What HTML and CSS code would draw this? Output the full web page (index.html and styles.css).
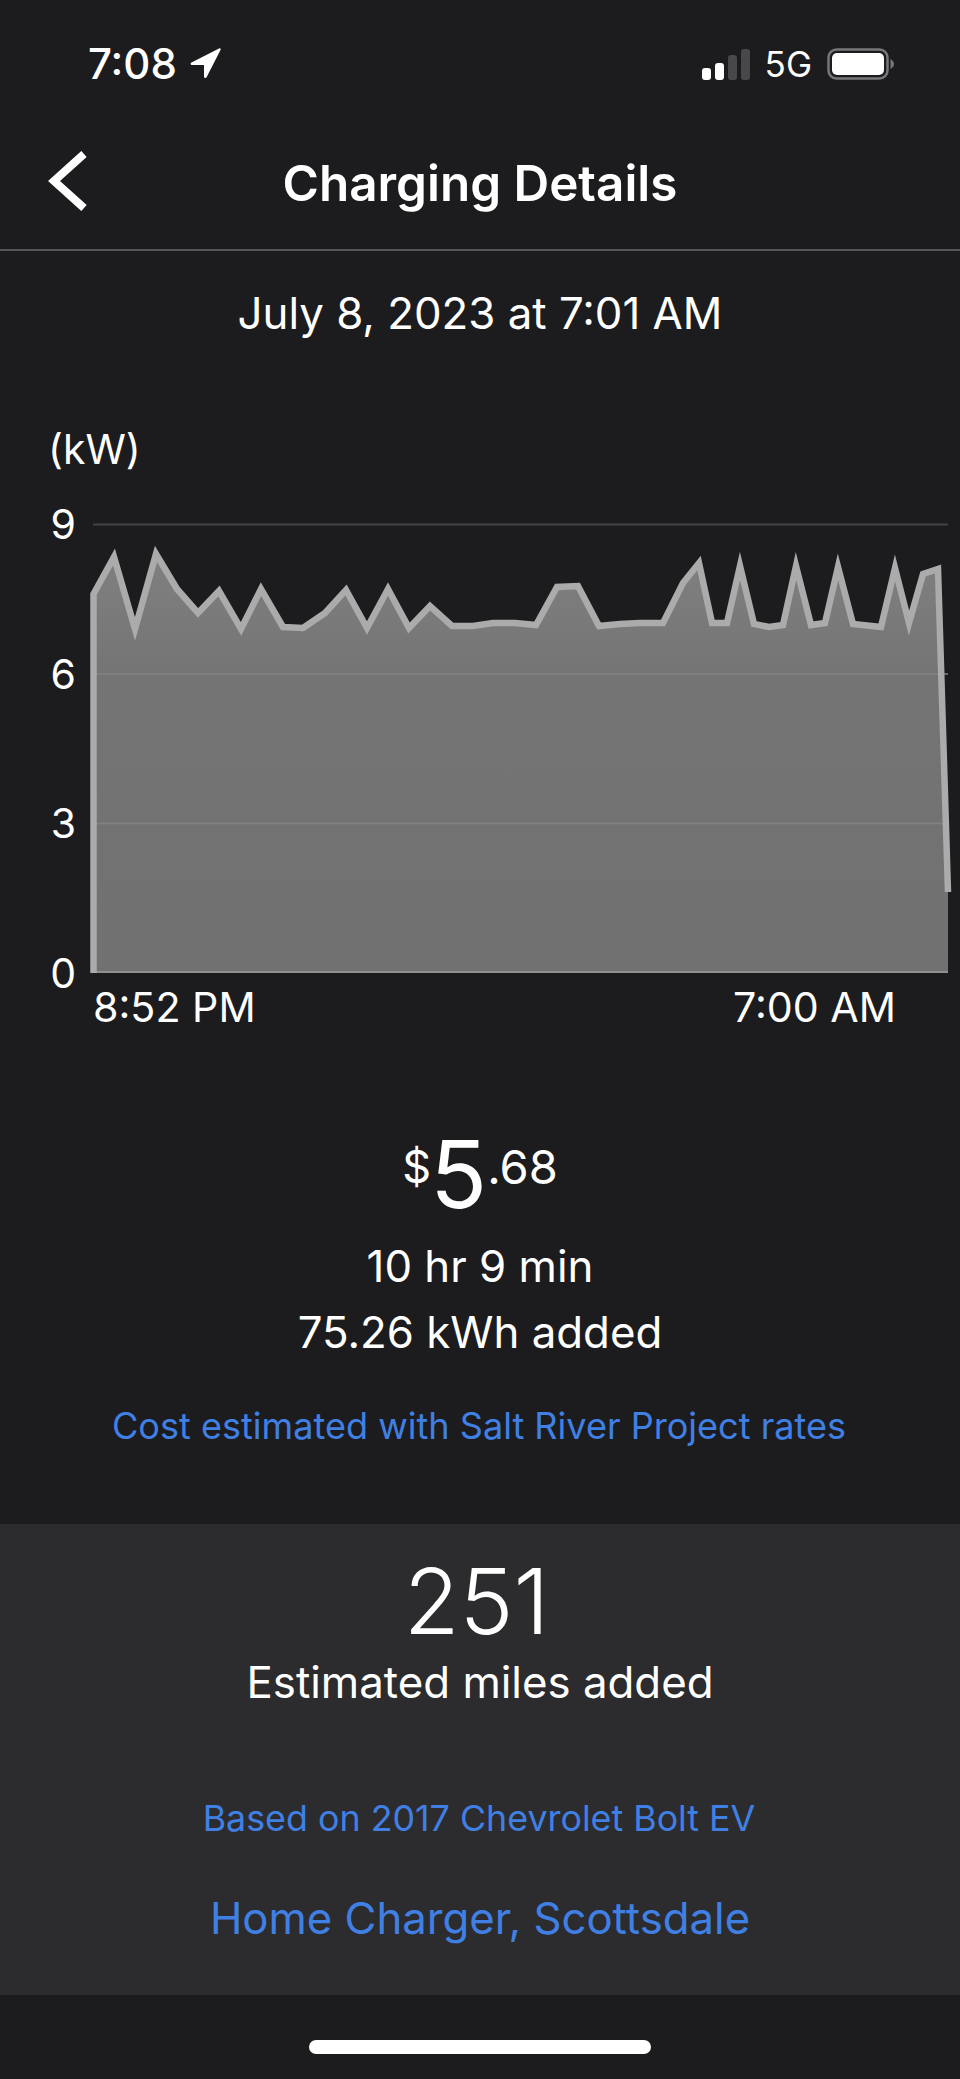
FILE: index.html
```html
<!DOCTYPE html>
<html lang="en">
<head>
<meta charset="utf-8">
<title>Charging Details</title>
<link rel="stylesheet" href="styles.css">
</head>
<body>
<div class="screen">
  <header class="status">
    <div class="status-left">
      <span class="clock">7:08</span>
      <svg class="loc" viewBox="0 0 32 32"><path d="M30 1.500 2.500 15.500c-1.500.8-1 2.500.6 2.500H15v11.500c0 1.700 2 2 2.700.6L31.500 3c.6-1.200-.3-2-1.500-1.500Z" fill="#fff"/></svg>
    </div>
    <div class="status-right">
      <div class="signal"><i class="bar b1"></i><i class="bar b2"></i><i class="bar b3"></i><i class="bar b4"></i></div>
      <span class="net">5G</span>
      <svg class="battery" viewBox="0 0 68 32"><rect x="1.500" y="1.500" width="59" height="29" rx="8" fill="none" stroke="#77777a" stroke-width="2.500"/><rect x="5" y="5" width="52" height="22" rx="5" fill="#fff"/><path d="M63.500 11v10c2-1 3.500-3 3.500-5s-1.500-4-3.500-5Z" fill="#77777a"/></svg>
    </div>
  </header>
  <nav class="nav">
    <svg class="back" viewBox="0 0 42 62"><path d="M37 4 7 31l30 27" fill="none" stroke="#fff" stroke-width="8"/></svg>
    <h1 class="title">Charging Details</h1>
  </nav>
  <p class="date">July 8, 2023 at 7:01 AM</p>
  <section class="chart">
    <div class="unit">(kW)</div>
    <div class="chart-row">
      <div class="y-axis"><span>9</span><span>6</span><span>3</span><span>0</span></div>
      <div class="plot">
        <svg class="plot-svg" viewBox="90 498 862 476">
          <defs><linearGradient id="fill" x1="0" y1="0" x2="0" y2="1"><stop offset="0" stop-color="#808080"/><stop offset=".3" stop-color="#747474"/><stop offset="1" stop-color="#717171"/></linearGradient></defs>
          <path d="M93 523.500H948" stroke="#424244" stroke-width="2" fill="none"/>
          <path fill="url(#fill)" d="M93.500 972V593L114 556 135 628 156 553 177 588 198 612 219 590 241 628 261 588 283 626 303 627 325 612 346 589 367 627 388 588 409 627 430 605 452 625 473 625 493 622 515 622 536 624 557 586 578 585 599 625 620 623 640 622 663 622 683 582 699 562 712 622 727 622 740 565 754 623 769 626 783 624 796 565 811 624 825 622 838 566 853 623 881 626 895 567 909 622 923 573 938 568 948 891V972Z"/>
          <path d="M96 673H948M96 822.500H948" stroke="#828282" stroke-width="1.500" fill="none"/>
          <path d="M93 971H948" stroke="#8f8f8f" stroke-width="2" fill="none"/>
          <path d="M93.500 972V593L114 556 135 628 156 553 177 588 198 612 219 590 241 628 261 588 283 626 303 627 325 612 346 589 367 627 388 588 409 627 430 605 452 625 473 625 493 622 515 622 536 624 557 586 578 585 599 625 620 623 640 622 663 622 683 582 699 562 712 622 727 622 740 565 754 623 769 626 783 624 796 565 811 624 825 622 838 566 853 623 881 626 895 567 909 622 923 573 938 568 948 891" fill="none" stroke="#ababab" stroke-width="6.500" stroke-linejoin="miter" stroke-miterlimit="30"/>
        </svg>
        <div class="x-axis"><span>8:52 PM</span><span>7:00 AM</span></div>
      </div>
    </div>
  </section>
  <section class="cost">
    <div class="price"><span class="cur">$</span><span class="dollars">5</span><span class="cents">.68</span></div>
    <p class="stat">10 hr 9 min</p>
    <p class="stat">75.26 kWh added</p>
    <a class="link rates">Cost estimated with Salt River Project rates</a>
  </section>
  <section class="panel">
    <div class="miles">251</div>
    <p class="stat miles-label">Estimated miles added</p>
    <a class="link based">Based on 2017 Chevrolet Bolt EV</a>
    <a class="home">Home Charger, Scottsdale</a>
  </section>
  <footer class="foot"><div class="home-bar"></div></footer>
</div>
</body>
</html>
```
FILE: styles.css
```css
* { box-sizing: border-box; }
html, body { margin: 0; padding: 0; background: #1c1c1e; }
.screen {
  width: 960px;
  height: 2079px;
  background: #1c1c1e;
  color: #fff;
  font-family: Inter, "Liberation Sans", sans-serif;
  display: flex;
  flex-direction: column;
  overflow: hidden;
}
p, h1 { margin: 0; }
.status {
  height: 126px;
  padding: 40px 65px 0 88px;
  display: flex;
  justify-content: space-between;
  align-items: flex-start;
}
.status-left { display: flex; align-items: center; height: 48px; gap: 12px; }
.clock { font-size: 42px; font-weight: 500; line-height: 48px; }
.loc { width: 32px; height: 32px; margin-top: -3px; }
.status-right { display: flex; align-items: center; height: 48px; }
.signal { display: flex; align-items: flex-end; gap: 4px; height: 31px; margin-right: 15px; }
.bar { display: block; width: 9px; border-radius: 3px; background: #fff; }
.b1 { height: 12px; }
.b2 { height: 17px; }
.b3 { height: 25px; background: #48484a; }
.b4 { height: 31px; background: #48484a; }
.net { font-size: 35px; font-weight: 400; line-height: 48px; margin-right: 15px; }
.battery { width: 68px; height: 32px; }
.nav {
  height: 125px;
  position: relative;
  display: flex;
  align-items: center;
  justify-content: center;
  border-bottom: 2px solid #565658;
  padding-bottom: 9px;
}
.back { position: absolute; left: 47px; top: 24px; width: 42px; height: 62px; }
.title { font-size: 49.400px; font-weight: 600; line-height: 60px; }
.date { text-align: center; font-size: 43.800px; font-weight: 400; line-height: 50px; margin-top: 38px; }
.chart { padding-top: 85px; }
.unit { font-size: 41px; line-height: 50px; padding-left: 48px; }
.chart-row { display: flex; margin-top: 25px; }
.y-axis {
  width: 90px;
  height: 499px;
  padding-right: 14px;
  display: flex;
  flex-direction: column;
  justify-content: space-between;
  align-items: flex-end;
  font-size: 41px;
  line-height: 50px;
}
.plot { width: 862px; }
.plot-svg { display: block; width: 862px; height: 476px; }
.x-axis {
  display: flex;
  justify-content: space-between;
  padding: 7px 56px 0 3px;
  font-size: 41.200px;
  line-height: 50px;
}
.cost { display: flex; flex-direction: column; align-items: center; margin-top: 91px; }
.price { display: flex; align-items: flex-start; height: 111px; }
.cur { font-size: 45px; line-height: 50px; margin-top: 19px; margin-right: -1px; }
.dollars { font-size: 94px; line-height: 106px; font-weight: 400; margin-top: -2px; }
.cents { font-size: 47px; line-height: 50px; margin-top: 19px; margin-left: 0; }
.stat { font-size: 43.800px; line-height: 66px; text-align: center; }
.link { color: #4080e4; font-size: 36.100px; line-height: 44px; }
.rates { margin-top: 38px; margin-right: 2px; }
.panel {
  margin-top: 76px;
  height: 471px;
  background: #2c2c2e;
  display: flex;
  flex-direction: column;
  align-items: center;
  padding-top: 24px;
}
.miles { font-size: 91px; line-height: 106px; font-weight: 300; margin-right: 7px; }
.miles-label { margin-top: -4px; }
.based { margin-top: 80px; font-size: 35.800px; margin-right: 2px; }
.home { color: #4080e4; font-size: 43.700px; line-height: 56px; margin-top: 51px; }
.foot { flex: 1; display: flex; justify-content: center; padding-top: 45px; }
.home-bar { width: 342px; height: 14px; border-radius: 7px; background: #fff; }
```
